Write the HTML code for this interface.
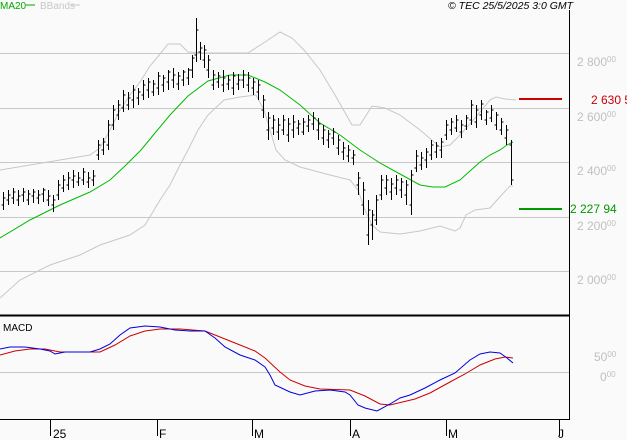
<!DOCTYPE html><html><head><meta charset="utf-8"><style>
html,body{margin:0;padding:0;background:#fafafa;width:627px;height:440px;overflow:hidden}
svg{display:block}
text{font-family:"Liberation Sans",sans-serif}
</style></head><body>
<svg width="627" height="440" xmlns="http://www.w3.org/2000/svg">
<rect width="627" height="440" fill="#fafafa"/>
<g stroke="#c8c8c8" stroke-width="1">
<line x1="0" y1="53.5" x2="569" y2="53.5"/>
<line x1="0" y1="108.5" x2="569" y2="108.5"/>
<line x1="0" y1="162.5" x2="569" y2="162.5"/>
<line x1="0" y1="217.5" x2="569" y2="217.5"/>
<line x1="0" y1="271.5" x2="569" y2="271.5"/>
<line x1="0" y1="372.5" x2="569" y2="372.5"/>
</g>
<line x1="569.5" y1="10" x2="569.5" y2="420" stroke="#000"/>
<line x1="0" y1="315.5" x2="570" y2="315.5" stroke="#000" stroke-width="2"/>
<line x1="0" y1="419.5" x2="570" y2="419.5" stroke="#000"/>
<g stroke="#000"><line x1="50.5" y1="420" x2="50.5" y2="436"/><line x1="157.5" y1="420" x2="157.5" y2="436"/><line x1="252.5" y1="420" x2="252.5" y2="436"/><line x1="350.5" y1="420" x2="350.5" y2="436"/><line x1="446.5" y1="420" x2="446.5" y2="436"/><line x1="559.5" y1="420" x2="559.5" y2="436"/></g>
<g font-size="12" fill="#000"><text x="53" y="438">25</text><text x="159" y="438">F</text><text x="254" y="438">M</text><text x="352" y="438">A</text><text x="448" y="438">M</text><text x="558" y="438">J</text></g>
<text x="0" y="9" font-size="10" fill="#00aa00">MA20</text><line x1="26" y1="5" x2="35" y2="5" stroke="#00aa00"/>
<text x="40" y="9" font-size="10" fill="#c8c8c8">BBands</text><line x1="71" y1="5" x2="80" y2="5" stroke="#c8c8c8"/>
<text x="448" y="9" font-size="10.5" font-style="italic" fill="#000">© TEC 25/5/2025 3:0 GMT</text>
<text x="3" y="331" font-size="10" fill="#000">MACD</text>
<g font-size="12" fill="#c0c0c0">
<text x="577" y="66">2 800<tspan font-size="8" dy="-4">00</tspan></text>
<text x="577" y="121">2 600<tspan font-size="8" dy="-4">00</tspan></text>
<text x="577" y="175">2 400<tspan font-size="8" dy="-4">00</tspan></text>
<text x="577" y="230">2 200<tspan font-size="8" dy="-4">00</tspan></text>
<text x="577" y="284">2 000<tspan font-size="8" dy="-4">00</tspan></text>
<text x="594" y="361">50<tspan font-size="8" dy="-4">00</tspan></text>
<text x="600" y="381">0<tspan font-size="8" dy="-4">00</tspan></text>
</g>
<line x1="519" y1="99" x2="562" y2="99" stroke="#cc0000" stroke-width="2"/>
<text x="591" y="104" font-size="12" fill="#cc0000">2 630 5</text>
<line x1="519" y1="209" x2="562" y2="209" stroke="#009900" stroke-width="2"/>
<text x="570" y="213" font-size="12" fill="#009900">2 227 94</text>
<polyline fill="none" stroke="#c8c8c8" points="0,170 30,165 60,160 90,155 100,148 110,130 120,110 130,95 140,82 150,66 160,54 168,44 180,44 188,52 205,53 224,53 248,53 265,42 280,32 292,38 304,50 320,70 335,95 352,125 360,125 372,106 385,108 400,115 420,130 440,147 450,145 460,135 475,118 490,100 496,97 505,99 516,100"/>
<polyline fill="none" stroke="#c8c8c8" points="0,298 20,280 50,265 80,255 100,245 130,235 145,225 160,200 170,185 180,165 188,150 198,130 208,115 224,100 240,97 256,95 264,110 270,130 276,150 285,160 300,167 330,175 350,180 358,190 365,210 372,225 380,232 400,234 420,231 440,226 455,231 460,228 466,215 475,210 490,208 497,200 510,186 513,186"/>
<polyline fill="none" stroke="#00bb00" points="0,238 30,220 60,205 90,192 110,180 125,166 141,150 155,133 170,115 188,96 208,81 230,75 248,75 265,82 280,90 300,105 320,123 340,135 360,150 380,163 400,174 420,185 433,187 445,187 460,180 470,171 480,162 490,155 500,150 507,145 513,142"/>
<path fill="none" stroke="#000" d="M3.5,192V210M1.5,205H3.5M3.5,198H5.5M8.5,190V205M6.5,200H8.5M8.5,195H10.5M13.5,188V204M11.5,198H13.5M13.5,192H15.5M18.5,190V206M16.5,200H18.5M18.5,196H20.5M23.5,188V202M21.5,195H23.5M23.5,192H25.5M28.5,190V205M26.5,200H28.5M28.5,194H30.5M33.5,189V203M31.5,196H33.5M33.5,192H35.5M38.5,190V204M36.5,198H38.5M38.5,195H40.5M43.5,188V202M41.5,194H43.5M43.5,190H45.5M48.5,190V206M46.5,200H48.5M48.5,196H50.5M53.5,195V212M51.5,205H53.5M53.5,200H55.5M58.5,180V200M56.5,195H58.5M58.5,185H60.5M63.5,175V192M61.5,188H63.5M63.5,180H65.5M68.5,172V190M66.5,185H68.5M68.5,178H70.5M73.5,170V188M71.5,180H73.5M73.5,176H75.5M78.5,172V186M76.5,182H78.5M78.5,178H80.5M83.5,168V185M81.5,180H83.5M83.5,172H85.5M88.5,172V188M86.5,182H88.5M88.5,178H90.5M93.5,170V186M91.5,180H93.5M93.5,176H95.5M98.5,140V160M96.5,155H98.5M98.5,145H100.5M103.5,138V155M101.5,150H103.5M103.5,142H105.5M108.5,120V150M106.5,145H108.5M108.5,125H110.5M113.5,105V130M111.5,125H113.5M113.5,110H115.5M118.5,100V120M116.5,115H118.5M118.5,105H120.5M123.5,90V112M121.5,108H123.5M123.5,95H125.5M128.5,92V110M126.5,105H128.5M128.5,98H130.5M133.5,85V108M131.5,100H133.5M133.5,90H135.5M138.5,88V105M136.5,98H138.5M138.5,92H140.5M143.5,80V100M141.5,95H143.5M143.5,85H145.5M148.5,78V98M146.5,90H148.5M148.5,82H150.5M153.5,80V96M151.5,92H153.5M153.5,84H155.5M158.5,72V95M156.5,88H158.5M158.5,76H160.5M163.5,75V92M161.5,85H163.5M163.5,78H165.5M168.5,70V90M166.5,82H168.5M168.5,72H170.5M173.5,68V88M171.5,80H173.5M173.5,75H175.5M178.5,72V90M176.5,84H178.5M178.5,76H180.5M183.5,70V86M181.5,80H183.5M183.5,72H185.5M188.5,68V85M186.5,78H188.5M188.5,70H190.5M192.5,55V78M190.5,70H192.5M192.5,58H194.5M196.5,18V62M194.5,55H196.5M196.5,30H198.5M200.5,42V60M198.5,52H200.5M200.5,48H202.5M204.5,45V68M202.5,60H204.5M204.5,50H206.5M208.5,55V78M206.5,70H208.5M208.5,60H210.5M213.5,70V90M211.5,85H213.5M213.5,75H215.5M218.5,72V88M216.5,82H218.5M218.5,76H220.5M223.5,70V92M221.5,85H223.5M223.5,78H225.5M228.5,75V90M226.5,84H228.5M228.5,80H230.5M233.5,72V95M231.5,88H233.5M233.5,76H235.5M238.5,74V90M236.5,84H238.5M238.5,80H240.5M243.5,70V88M241.5,80H243.5M243.5,75H245.5M248.5,72V92M246.5,85H248.5M248.5,78H250.5M253.5,78V95M251.5,88H253.5M253.5,82H255.5M258.5,80V100M256.5,92H258.5M258.5,85H260.5M263.5,95V118M261.5,110H263.5M263.5,100H265.5M268.5,112V140M266.5,130H268.5M268.5,118H270.5M273.5,115V135M271.5,128H273.5M273.5,120H275.5M278.5,118V140M276.5,132H278.5M278.5,125H280.5M283.5,115V135M281.5,130H283.5M283.5,120H285.5M288.5,118V142M286.5,135H288.5M288.5,124H290.5M293.5,115V138M291.5,130H293.5M293.5,122H295.5M298.5,120V135M296.5,128H298.5M298.5,124H300.5M303.5,118V135M301.5,132H303.5M303.5,122H305.5M308.5,115V132M306.5,126H308.5M308.5,120H310.5M313.5,112V130M311.5,124H313.5M313.5,118H315.5M318.5,118V140M316.5,130H318.5M318.5,124H320.5M323.5,125V145M321.5,138H323.5M323.5,130H325.5M328.5,130V148M326.5,140H328.5M328.5,134H330.5M333.5,128V145M331.5,138H333.5M333.5,132H335.5M338.5,135V155M336.5,148H338.5M338.5,140H340.5M343.5,142V160M341.5,152H343.5M343.5,148H345.5M348.5,145V162M346.5,156H348.5M348.5,150H350.5M353.5,150V165M351.5,158H353.5M353.5,155H355.5M358.5,172V195M356.5,185H358.5M358.5,178H360.5M363.5,182V215M361.5,205H363.5M363.5,190H365.5M368.5,200V245M366.5,235H368.5M368.5,210H370.5M372.5,210V240M370.5,225H372.5M372.5,215H374.5M376.5,195V225M374.5,220H376.5M376.5,200H378.5M381.5,175V200M379.5,195H381.5M381.5,180H383.5M386.5,175V195M384.5,188H386.5M386.5,180H388.5M391.5,178V200M389.5,192H391.5M391.5,184H393.5M396.5,175V195M394.5,188H396.5M396.5,180H398.5M401.5,178V198M399.5,190H401.5M401.5,182H403.5M406.5,180V205M404.5,195H406.5M406.5,185H408.5M411.5,170V215M409.5,205H411.5M411.5,175H413.5M416.5,150V172M414.5,168H416.5M416.5,156H418.5M421.5,152V170M419.5,165H421.5M421.5,158H423.5M426.5,148V168M424.5,160H426.5M426.5,152H428.5M431.5,140V160M429.5,155H431.5M431.5,145H433.5M436.5,142V158M434.5,152H436.5M436.5,146H438.5M441.5,138V158M439.5,150H441.5M441.5,142H443.5M446.5,120V140M444.5,135H446.5M446.5,125H448.5M451.5,118V135M449.5,130H451.5M451.5,122H453.5M456.5,115V132M454.5,128H456.5M456.5,120H458.5M461.5,120V138M459.5,132H461.5M461.5,125H463.5M466.5,115V130M464.5,126H466.5M466.5,118H468.5M471.5,100V125M469.5,120H471.5M471.5,105H473.5M476.5,105V128M474.5,122H476.5M476.5,110H478.5M481.5,100V120M479.5,115H481.5M481.5,104H483.5M486.5,110V125M484.5,120H486.5M486.5,112H488.5M491.5,105V122M489.5,118H491.5M491.5,110H493.5M496.5,112V130M494.5,125H496.5M496.5,115H498.5M501.5,118V135M499.5,130H501.5M501.5,122H503.5M506.5,125V145M504.5,138H506.5M506.5,130H508.5M511.5,140V185M509.5,145H511.5M511.5,180H513.5"/>
<polyline fill="none" stroke="#cc0000" points="0,355 15,351 30,349 45,349 60,352 80,352 100,352 115,345 130,336 145,331 160,329 180,329 205,331 220,337 240,345 255,351 265,358 280,372 290,380 305,386 320,389 350,390 365,396 380,404 390,405 415,399 430,393 450,382 465,374 480,365 495,359 505,357 513,358"/>
<polyline fill="none" stroke="#0000dd" points="0,349 10,347 25,347 40,349 50,351 55,354 65,352 90,352 100,349 110,344 120,335 130,328 145,326 160,327 175,330 190,331 205,331 215,338 225,347 240,355 255,360 265,367 270,375 275,385 290,392 300,395 315,391 330,390 345,392 350,395 358,405 365,408 377,411 390,404 400,398 410,395 425,388 440,380 455,373 470,360 480,354 490,352 500,353 507,358 513,363"/>
</svg>
</body></html>
